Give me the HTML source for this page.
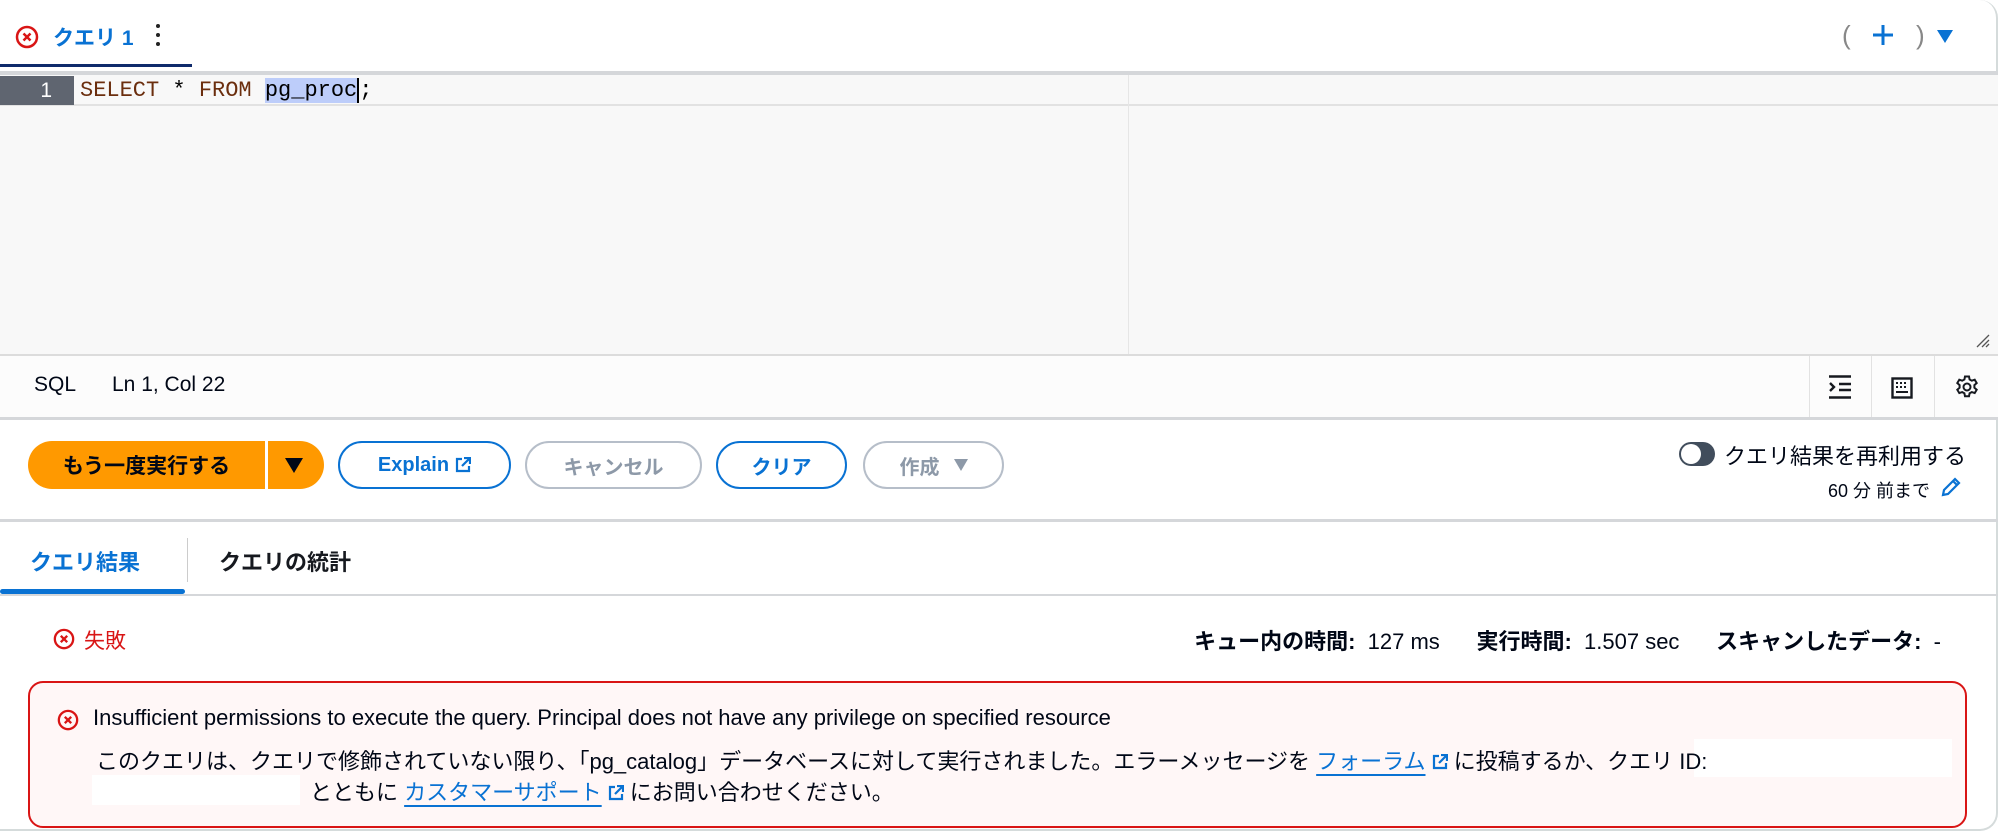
<!DOCTYPE html>
<html><head><meta charset="utf-8">
<style>
*{box-sizing:border-box;margin:0;padding:0}
body{width:2000px;height:836px;background:#fff;font-family:"Liberation Sans","Noto Sans CJK JP",sans-serif;color:#000716;position:relative;overflow:hidden;font-size:20px}
.a{position:absolute}
.frame{left:0;top:0;width:1998px;height:831px;border:2px solid #d5dbdb;border-top:none;border-left:none;border-radius:0 18px 18px 0}
.btn{position:absolute;top:441px;height:48px;border-radius:24px;border:2px solid #0972d3;color:#0972d3;font-weight:bold;display:flex;align-items:center;justify-content:center;font-size:20px;background:#fff}
.dis{border-color:#b6bec9;color:#8d99a8}
.mono{font-family:"Liberation Mono","DejaVu Sans Mono",monospace}
.ext{display:inline-block;width:16px;height:16px;vertical-align:-1px;margin-left:6px}
a{color:#0972d3;text-decoration:underline;text-underline-offset:5px}
</style></head><body>
<div class="a frame"></div>
<svg class="a" style="left:15px;top:25px" width="24" height="24" viewBox="0 0 24 24"><circle cx="12" cy="12" r="10" fill="none" stroke="#d91515" stroke-width="2.5"/><path d="M8.5 8.5l7 7M15.5 8.5l-7 7" stroke="#d91515" stroke-width="2.5"/></svg>
<div class="a" style="left:53px;top:22px;color:#0972d3;font-weight:bold;font-size:21px">クエリ 1</div>
<div class="a" style="left:156px;top:24px;width:4px;height:24px"><div style="width:4px;height:4px;border-radius:2px;background:#222;margin-bottom:5px"></div><div style="width:4px;height:4px;border-radius:2px;background:#222;margin-bottom:5px"></div><div style="width:4px;height:4px;border-radius:2px;background:#222"></div></div>
<div class="a" style="left:0;top:64px;width:192px;height:3px;background:#0f2a6b"></div>
<div class="a" style="left:1842px;top:20px;font-size:26px;color:#888">(</div>
<svg class="a" style="left:1872px;top:24px" width="22" height="22"><path d="M11 1v20M1 11h20" stroke="#0972d3" stroke-width="3"/></svg>
<div class="a" style="left:1916px;top:20px;font-size:26px;color:#888">)</div>
<svg class="a" style="left:1937px;top:30px" width="16" height="14"><path d="M0 0h16L8 13z" fill="#0972d3"/></svg>
<div class="a" style="left:0;top:71px;width:1998px;height:4px;background:#d5d7da"></div>
<div class="a" style="left:0;top:75px;width:1998px;height:280px;background:#f8f8f8"></div>
<div class="a" style="left:0;top:104px;width:1998px;height:2px;background:#e2e2e2"></div>
<div class="a" style="left:1128px;top:75px;width:1px;height:280px;background:#e6e6e6"></div>
<div class="a" style="left:0;top:76px;width:74px;height:29px;background:#5f6570;color:#fff;font-size:21px;text-align:right;padding-right:22px;line-height:29px">1</div>
<div class="a mono" style="left:80px;top:76px;line-height:29px;font-size:22px;color:#6b2e0e;white-space:pre">SELECT <span style="color:#000">*</span> FROM <span style="color:#000;background:#bdcdfa">pg_proc</span><span style="border-left:2px solid #000;color:#000">;</span></div>
<svg class="a" style="left:1974px;top:332px" width="16" height="16"><path d="M15 3L3 15M15 8L8 15M15 12L12 15" stroke="#555" stroke-width="1.3"/></svg>
<div class="a" style="left:0;top:354px;width:1998px;height:2px;background:#dcdcdc"></div>
<div class="a" style="left:0;top:356px;width:1998px;height:62px;background:#fcfcfc"></div>
<div class="a" style="left:34px;top:373px;font-size:21px">SQL</div>
<div class="a" style="left:112px;top:373px;font-size:21px">Ln 1, Col 22</div>
<div class="a" style="left:1809px;top:356px;width:1px;height:62px;background:#e2e2e2"></div>
<div class="a" style="left:1871px;top:356px;width:1px;height:62px;background:#e2e2e2"></div>
<div class="a" style="left:1934px;top:356px;width:1px;height:62px;background:#e2e2e2"></div>
<svg class="a" style="left:1828px;top:375px" width="24" height="24" viewBox="0 0 24 24"><path d="M1 1.5h22M1 22.5h22M11 9h12M11 15h12M2 8l4 4-4 4" stroke="#16191f" stroke-width="2.4" fill="none"/></svg>
<svg class="a" style="left:1891px;top:377px" width="22" height="22" viewBox="0 0 22 22"><rect x="1.5" y="1.5" width="19" height="19" fill="none" stroke="#16191f" stroke-width="2.4"/><path d="M5 6h2M9 6h2M13 6h2M5 10h2M9 10h2M13 10h2M5 15h12" stroke="#16191f" stroke-width="2"/></svg>
<svg class="a" style="left:1955px;top:375px" width="24" height="24" viewBox="0 0 24 24"><path d="M10 1.5h4l.6 3 2.2 1.2 2.9-1 2 3.4-2.3 2v2.6l2.3 2-2 3.4-2.9-1-2.2 1.2-.6 3h-4l-.6-3-2.2-1.2-2.9 1-2-3.4 2.3-2v-2.6l-2.3-2 2-3.4 2.9 1 2.2-1.200z" fill="none" stroke="#16191f" stroke-width="2"/><circle cx="12" cy="12" r="3.5" fill="none" stroke="#16191f" stroke-width="2"/></svg>
<div class="a" style="left:0;top:417px;width:1998px;height:3px;background:#d5d7da"></div>
<div class="a" style="left:28px;top:441px;width:296px;height:48px;border-radius:24px;background:#ff9900"></div>
<div class="a" style="left:265px;top:441px;width:3px;height:48px;background:#fff"></div>
<div class="a" style="left:28px;top:441px;width:237px;height:48px;display:flex;align-items:center;justify-content:center;font-weight:bold;font-size:21px">もう一度実行する</div>
<svg class="a" style="left:285px;top:458px" width="18" height="15"><path d="M0 0h18L9 15z" fill="#000716"/></svg>
<div class="btn" style="left:338px;width:173px">Explain<svg class="ext" viewBox="0 0 16 16"><path d="M7 2H2v12h12V9M9 1h6v6M15 1L7 9" stroke="#0972d3" stroke-width="2.2" fill="none"/></svg></div>
<div class="btn dis" style="left:525px;width:177px">キャンセル</div>
<div class="btn" style="left:716px;width:131px">クリア</div>
<div class="btn dis" style="left:863px;width:141px">作成<svg style="margin-left:14px" width="14" height="12"><path d="M0 0h14L7 12z" fill="#8d99a8"/></svg></div>
<div class="a" style="left:1679px;top:442px;width:36px;height:24px;border-radius:12px;background:#414d5c"></div>
<div class="a" style="left:1681px;top:444px;width:20px;height:20px;border-radius:10px;background:#fff"></div>
<div class="a" style="right:34px;top:439px;font-size:22px">クエリ結果を再利用する</div>
<div class="a" style="right:70px;top:477px;font-size:18px">60 分 前まで</div>
<svg class="a" style="left:1940px;top:476px" width="22" height="22" viewBox="0 0 22 22"><path d="M3 19l1-5L15 3l4 4L8 18z M13 5l4 4" stroke="#0972d3" stroke-width="2.2" fill="none"/></svg>
<div class="a" style="left:0;top:519px;width:1998px;height:3px;background:#d5d7da"></div>
<div class="a" style="left:30px;top:545px;font-size:22px;color:#0972d3;font-weight:bold">クエリ結果</div>
<div class="a" style="left:187px;top:538px;width:1px;height:44px;background:#ccc"></div>
<div class="a" style="left:219px;top:545px;font-size:22px;font-weight:bold;color:#16191f">クエリの統計</div>
<div class="a" style="left:0;top:589px;width:185px;height:5px;border-radius:3px;background:#0972d3"></div>
<div class="a" style="left:0;top:594px;width:1998px;height:2px;background:#d5d7da"></div>
<svg class="a" style="left:53px;top:628px" width="22" height="22" viewBox="0 0 24 24"><circle cx="12" cy="12" r="10" fill="none" stroke="#d91515" stroke-width="2.5"/><path d="M8.5 8.5l7 7M15.5 8.5l-7 7" stroke="#d91515" stroke-width="2.5"/></svg>
<div class="a" style="left:84px;top:625px;font-size:21px;color:#d91515">失敗</div>
<div class="a" style="right:59px;top:624px;font-size:22px;white-space:pre"><b>キュー内の時間:</b>  127 ms      <b>実行時間:</b>  1.507 sec      <b>スキャンしたデータ:</b>  -</div>
<div class="a" style="left:28px;top:681px;width:1939px;height:147px;border:2px solid #d91515;border-radius:15px;background:#fff7f7"></div>
<svg class="a" style="left:57px;top:709px" width="22" height="22" viewBox="0 0 24 24"><circle cx="12" cy="12" r="10" fill="none" stroke="#d91515" stroke-width="2.5"/><path d="M8.5 8.5l7 7M15.5 8.5l-7 7" stroke="#d91515" stroke-width="2.5"/></svg>
<div class="a" style="left:93px;top:705px;font-size:22px;white-space:nowrap">Insufficient permissions to execute the query. Principal does not have any privilege on specified resource</div>
<div class="a" style="left:1694px;top:739px;width:258px;height:38px;background:#fff"></div>
<div class="a" style="left:92px;top:775px;width:208px;height:30px;background:#fff"></div>
<div class="a" style="left:96px;top:744px;font-size:22px;white-space:nowrap">このクエリは、クエリで修飾されていない限り、「pg_catalog」データベースに対して実行されました。エラーメッセージを <a>フォーラム</a><svg class="ext" viewBox="0 0 16 16"><path d="M7 2H2v12h12V9M9 1h6v6M15 1L7 9" stroke="#0972d3" stroke-width="2.2" fill="none"/></svg> に投稿するか、クエリ ID:</div>
<div class="a" style="left:310px;top:775px;font-size:22px;white-space:nowrap">とともに <a>カスタマーサポート</a><svg class="ext" viewBox="0 0 16 16"><path d="M7 2H2v12h12V9M9 1h6v6M15 1L7 9" stroke="#0972d3" stroke-width="2.2" fill="none"/></svg> にお問い合わせください。</div>
</body></html>
